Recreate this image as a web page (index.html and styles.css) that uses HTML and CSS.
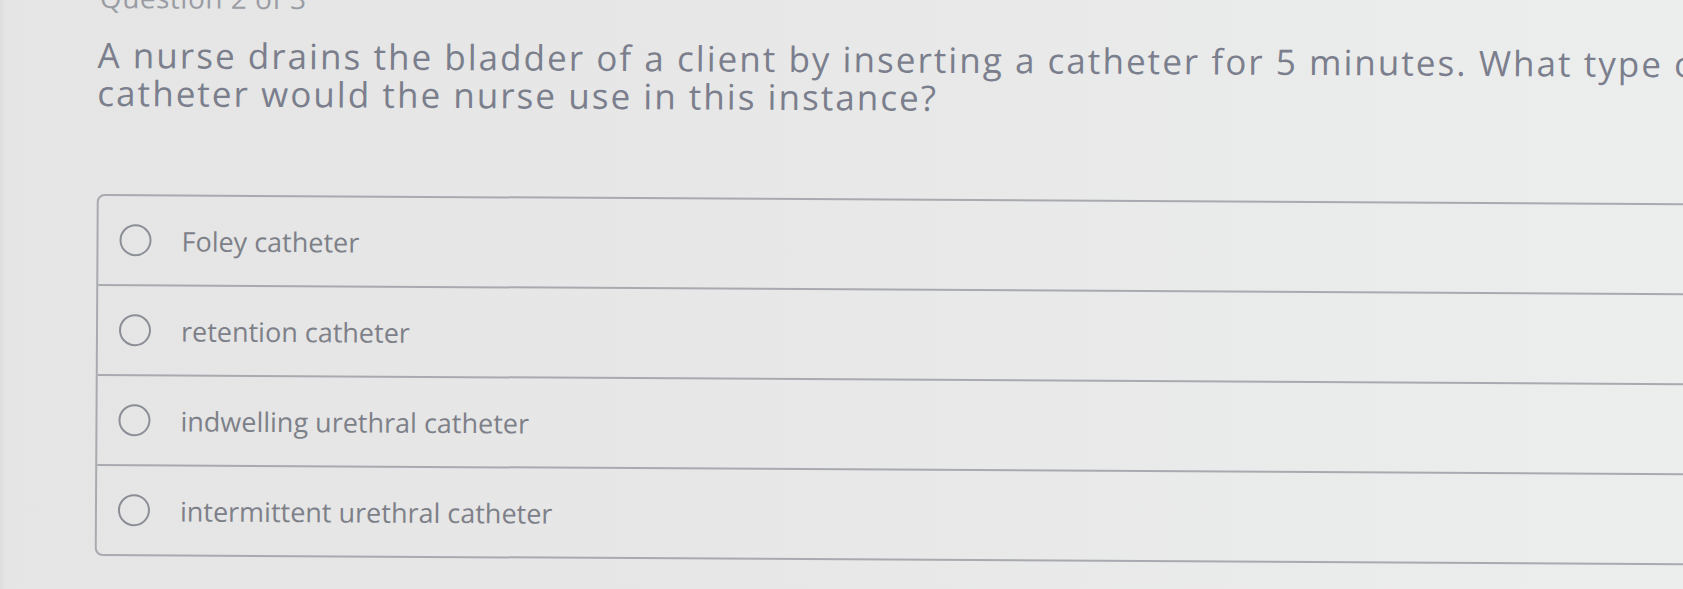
FILE: index.html
```html
<!DOCTYPE html>
<html lang="en">
<head>
<meta charset="utf-8">
<title>Question 2 of 3</title>
<link rel="stylesheet" href="styles.css">
</head>
<body>
<div class="screen">
  <main class="page">
    <div class="counter">Question 2 of 3</div>
    <h1 class="question">A nurse drains the bladder of a client by inserting a catheter for 5 minutes. What type of catheter would the nurse use in this instance?</h1>
    <div class="options">
      <label class="option"><span class="radio"></span><span class="label">Foley catheter</span></label>
      <label class="option"><span class="radio"></span><span class="label">retention catheter</span></label>
      <label class="option"><span class="radio"></span><span class="label">indwelling urethral catheter</span></label>
      <label class="option"><span class="radio"></span><span class="label">intermittent urethral catheter</span></label>
    </div>
  </main>
</div>
</body>
</html>
```
FILE: styles.css
```css
html, body {
  margin: 0;
  padding: 0;
  height: 100%;
  overflow: hidden;
}

body {
  background: linear-gradient(90deg, #dcdddc 0px, #e4e5e4 6px, #e6e7e6 40%, #eceeed 100%);
  font-family: "Open Sans", "Noto Sans", sans-serif;
}

.screen {
  width: 100%;
  height: 100%;
  overflow: hidden;
}

.page {
  width: 1800px;
  padding-left: 98px;
  transform: rotate(0.33deg);
  transform-origin: 98px 0;
}

.counter {
  font-size: 28px;
  line-height: 28px;
  color: #9a9ca4;
  margin-top: -17px;
  padding-left: 2px;
  letter-spacing: 0.5px;
}

.question {
  margin: 25px 0 0 0;
  width: 1700px;
  font-size: 35px;
  line-height: 38px;
  font-weight: 400;
  color: #7b7e8c;
  letter-spacing: 2.05px;
}

.options {
  margin-top: 82px;
  width: 1700px;
  border: 2px solid #a8aab0;
  border-radius: 8px;
  display: flex;
  flex-direction: column;
}

.option {
  height: 88px;
  display: flex;
  align-items: center;
  padding-left: 21px;
  border-top: 2px solid #a8aab0;
}

.option:first-child {
  border-top: none;
}

.radio {
  width: 28px;
  height: 28px;
  border: 2.5px solid #8c8e97;
  border-radius: 50%;
  flex: none;
}

.label {
  margin-left: 30px;
  font-size: 27px;
  color: #7e8089;
}
```
